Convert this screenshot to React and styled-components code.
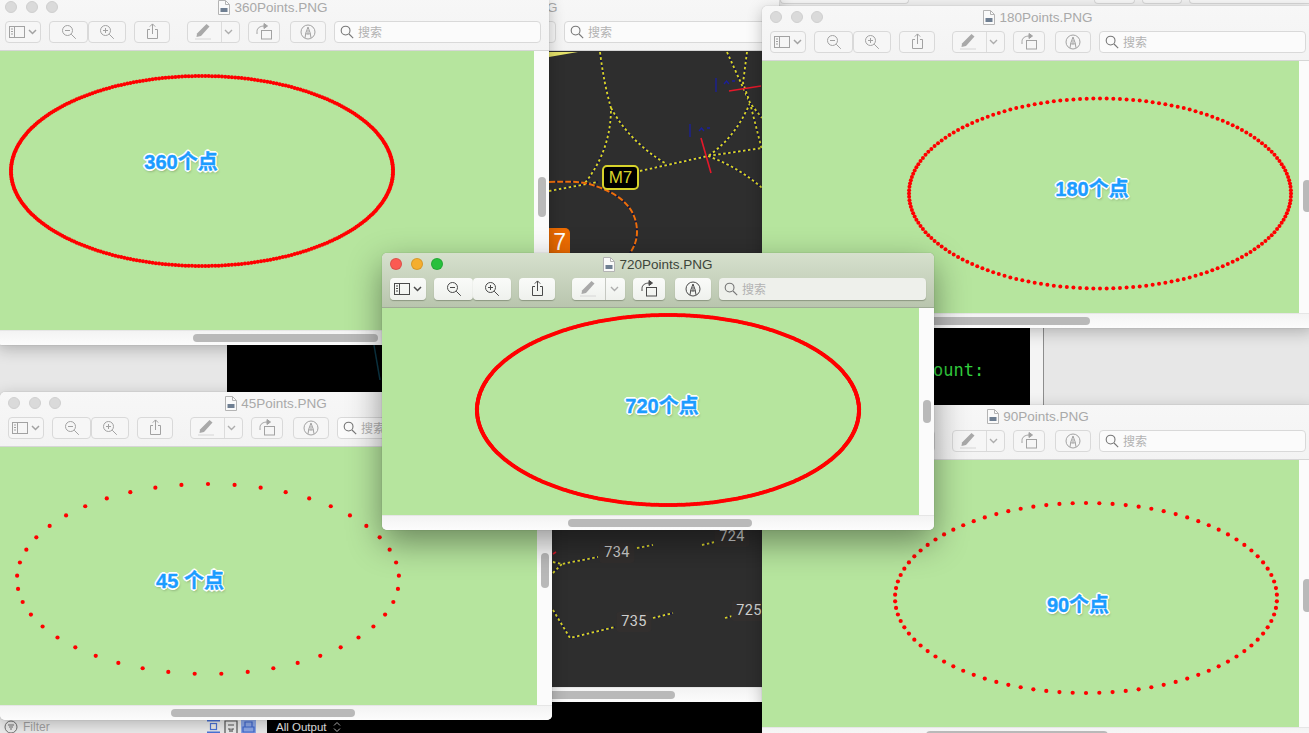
import React from 'react';
import styled, { createGlobalStyle } from 'styled-components';

const GlobalStyle = createGlobalStyle`
  html, body {
    margin: 0;
    padding: 0;
    width: 100%;
    height: 100%;
    overflow: hidden;
    background: #000;
    font-family: "Liberation Sans", "Noto Sans CJK SC", sans-serif;
  }
`;

const Desktop = styled.div`
  position: relative;
  width: 1309px;
  height: 733px;
  overflow: hidden;
  background: #000;
`;

/* the Xcode window that shows through the gaps between the previews */
const Backdrop = styled.div`
  height: 100%;
  display: flex;
  flex-direction: column;
`;

const BackdropTop = styled.div`
  flex: none;
  height: 20px;
  display: flex;
  gap: 7px;
  padding-left: 780px;
  background: #f1f1f1;
`;

const GhostButton = styled.div`
  flex: none;
  width: ${({ $w }) => $w}px;
  margin-left: ${({ $ml }) => $ml || 0}px;
  height: 3px;
  border: 1px solid #d8d8d8;
  border-top: 0;
  border-radius: 0 0 4px 4px;
  background: #f7f7f7;
`;

const BackdropMiddle = styled.div`
  flex: 1;
  display: grid;
  grid-template-columns: 227px 803px 14px 1fr;
`;

const GreyPane = styled.div`
  background: #e7e7e7;
`;

const LightPane = styled.div`
  background: #f4f4f4;
  border-right: 1px solid #8d8d8d;
`;

const ConsolePane = styled.div`
  position: relative;
  background: #000;
  padding: 339px 0 0 706px;
  font: 17px/22px "DejaVu Sans Mono", monospace;
  color: #33d03f;
`;

const ConsoleStroke = styled.svg`
  position: absolute;
  left: 145px;
  top: 325px;
  width: 10px;
  height: 35px;
`;

const BackdropBottom = styled.div`
  flex: none;
  height: 13px;
  display: flex;
  align-items: center;
`;

const DebugBar = styled.div`
  flex: none;
  width: 267px;
  height: 100%;
  display: flex;
  align-items: center;
  background: #ececec;
  color: #a3a3a3;
  font-size: 12px;
`;

const FilterIcon = styled.svg`
  flex: none;
  margin-left: 4px;
`;

const FilterLabel = styled.span`
  margin-left: 5px;
  width: 184px;
`;

const OutputBar = styled.div`
  display: flex;
  align-items: center;
  gap: 6px;
  padding-left: 9px;
  color: #e8e8e8;
  font-size: 11.5px;
`;

const Window = styled.section`
  position: absolute;
  left: ${({ $x }) => $x}px;
  top: ${({ $y }) => $y}px;
  width: 552px;
  height: ${({ $h }) => $h}px;
  display: flex;
  flex-direction: column;
  border-radius: 5px;
  overflow: hidden;
  background: #f6f6f6;
  box-shadow: ${({ $active }) => ($active
    ? '0 12px 34px rgba(0,0,0,.42), 0 0 1px rgba(0,0,0,.4)'
    : '0 4px 16px rgba(0,0,0,.24), 0 0 1px rgba(0,0,0,.35)')};
  ${({ $clipLeft }) => ($clipLeft ? `clip-path: inset(0 -40px -40px ${$clipLeft}px);` : '')}
`;

const Chrome = styled.header`
  position: relative;
  flex: none;
  height: 55px;
  box-sizing: border-box;
  padding-top: 25px;
  border-bottom: 1px solid ${({ $active }) => ($active ? '#9fab96' : '#d6d6d6')};
  background: ${({ $active }) => ($active
    ? 'linear-gradient(#d6e0cd, #b9c5ae)'
    : 'linear-gradient(#f7f7f7, #f3f3f3)')};
`;

const Lights = styled.div`
  position: absolute;
  left: 8px;
  top: 5px;
  display: flex;
  gap: 8.500px;
`;

const Light = styled.span`
  width: 12px;
  height: 12px;
  border-radius: 50%;
  box-sizing: border-box;
  background: ${({ $color }) => $color || '#dadada'};
  border: 1px solid ${({ $color }) => ($color ? 'rgba(0,0,0,.12)' : '#cfcfcf')};
`;

const Title = styled.div`
  position: absolute;
  left: 0;
  right: 0;
  top: 3px;
  display: flex;
  justify-content: center;
  align-items: center;
  gap: 4px;
  height: 16px;
  font-size: 13.5px;
  color: ${({ $active }) => ($active ? '#3d453a' : '#a9a9a9')};
`;

const Toolbar = styled.div`
  display: flex;
  gap: 8px;
  height: 22px;
  padding: 0 8px;
`;

const Button = styled.div`
  flex: none;
  width: ${({ $w }) => $w}px;
  margin-left: ${({ $ml }) => $ml || 0}px;
  box-sizing: border-box;
  padding-bottom: 1px;
  display: flex;
  align-items: center;
  justify-content: center;
  border-radius: 4px;
  color: ${({ $active }) => ($active ? '#4a4a4a' : '#a2a2a2')};
  background: ${({ $active }) => ($active ? 'linear-gradient(#fafbf9, #eff1ed)' : '#f6f6f6')};
  border: ${({ $active }) => ($active ? '0' : '1px solid #d9d9d9')};
  box-shadow: ${({ $active }) => ($active ? '0 1px 1px rgba(60,70,50,.38)' : 'none')};
`;

const ButtonPair = styled.div`
  flex: none;
  display: flex;
`;

const Split = styled(Button)`
  justify-content: space-around;
  position: relative;
`;

const SplitLine = styled.span`
  position: absolute;
  top: 0;
  bottom: 0;
  left: ${({ $at }) => $at}px;
  width: 1px;
  background: ${({ $active }) => ($active ? '#c5c8c1' : '#dcdcdc')};
`;

const SearchField = styled(Button)`
  flex: 1;
  justify-content: flex-start;
  gap: 4px;
  padding-left: 5px;
  font-size: 12px;
  color: #b2b2b2;
  background: ${({ $active }) => ($active ? '#eef0eb' : '#fbfbfb')};
`;

const SearchHint = styled.span`
  font-family: "Noto Sans CJK SC", sans-serif;
`;

const Body = styled.div`
  flex: 1;
  min-height: 0;
  display: grid;
  grid-template-columns: 537px 15px;
  grid-template-rows: 1fr 15px;
`;

const Canvas = styled.div`
  position: relative;
  overflow: hidden;
  background: ${({ $dark }) => ($dark ? '#2e2e2e' : '#b6e59e')};
`;

const Figure = styled.svg`
  position: absolute;
  left: 0;
  top: 0;
  width: 100%;
  height: 100%;
`;

const Caption = styled.div`
  position: absolute;
  left: ${({ $x }) => $x}px;
  top: ${({ $y }) => $y}px;
  transform: translate(-50%, -50%);
  white-space: pre;
  font: bold 20px/24px "Liberation Sans", "Noto Sans CJK SC", sans-serif;
  color: #1c9cff;
  -webkit-text-stroke: .4px #1c9cff;
  text-shadow:
    1.7px 0 0 #fff, -1.7px 0 0 #fff, 0 1.7px 0 #fff, 0 -1.7px 0 #fff,
    1.3px 1.3px 0 #fff, -1.3px 1.3px 0 #fff, 1.3px -1.3px 0 #fff, -1.3px -1.3px 0 #fff,
    1px 2px 3px rgba(0,0,0,.4);
`;

const VTrack = styled.div`
  position: relative;
  background: #fbfbfb;
`;

const VThumb = styled.div`
  position: absolute;
  left: 4px;
  top: ${({ $top }) => $top}px;
  width: 8px;
  height: ${({ $h }) => $h}px;
  border-radius: 4px;
  background: #b9b9b9;
`;

const HTrack = styled.div`
  position: relative;
  grid-column: 1 / 3;
  background: linear-gradient(#f3f3f3, #fcfcfc);
  border-top: 1px solid #e6e6e6;
`;

const HThumb = styled.div`
  position: absolute;
  left: ${({ $left }) => $left}px;
  top: 3px;
  width: ${({ $w }) => $w}px;
  height: 8px;
  border-radius: 4px;
  background: #b9b9b9;
`;

const MapLabel = styled.div`
  position: absolute;
  left: ${({ $x }) => $x}px;
  top: ${({ $y }) => $y}px;
  transform: translate(-50%, -50%);
  padding: 2px 5px;
  border-radius: 3px;
  background: #322f2e;
  color: #cfcfcf;
  font: 400 14.5px/16px Roboto, "Liberation Sans", sans-serif;
  letter-spacing: .3px;
`;

const StopBadge = styled.div`
  position: absolute;
  left: ${({ $x }) => $x}px;
  top: ${({ $y }) => $y}px;
  width: 37px;
  height: 25px;
  box-sizing: border-box;
  display: flex;
  align-items: center;
  justify-content: center;
  border: 2px solid #d7d32b;
  border-radius: 5px;
  background: #000;
  color: #d7d32b;
  font: 17px/20px "Liberation Sans", sans-serif;
`;

const LineBadge = styled.div`
  position: absolute;
  left: ${({ $x }) => $x}px;
  top: ${({ $y }) => $y}px;
  width: 21px;
  height: 26px;
  border-radius: 0 5px 0 0;
  background: #ed6c02;
  color: #fff;
  font: 23px/28px "Liberation Sans", sans-serif;
  text-align: right;
  padding-right: 4px;
  box-sizing: border-box;
`;

const Sidebar = () => (
  <svg width="30" height="14" viewBox="0 0 30 14" fill="none" stroke="currentColor" strokeWidth="1">
    <rect x="1.5" y="1.5" width="15" height="11" />
    <path d="M6.5 1.5v11M3 4h2M3 6.5h2M3 9h2" />
    <path d="M21 5l3.5 3.5L28 5" strokeWidth="1.5" />
  </svg>
);

const Zoom = ({ plus }) => (
  <svg width="16" height="16" viewBox="0 0 16 16" fill="none" stroke="currentColor" strokeWidth="1">
    <circle cx="6.5" cy="6.5" r="5" />
    <path d="M10.2 10.2l4.6 4.6M4 6.5h5" />
    {plus && <path d="M6.5 4v5" />}
  </svg>
);

const Share = () => (
  <svg width="13" height="17" viewBox="0 0 13 17" fill="none" stroke="currentColor" strokeWidth="1">
    <path d="M4 6.5H1.5v9h10v-9H9M6.5 11V1M3.8 3.6l2.7-2.7 2.7 2.7" />
  </svg>
);

const Pen = () => (
  <svg width="18" height="17" viewBox="0 0 18 17">
    <path d="M3 10.5L12.5 1l3 2.5L7 13l-4.500 1z" fill="#a9a9a9" />
    <path d="M1 16h16" stroke="#d6d6d6" strokeWidth="1" />
  </svg>
);

const Caret = () => (
  <svg width="9" height="6" viewBox="0 0 9 6" fill="none" stroke="#adadad" strokeWidth="1.4">
    <path d="M1 1l3.5 3.5L8 1" />
  </svg>
);

const Rotate = () => (
  <svg width="19" height="17" viewBox="0 0 19 17" fill="none" stroke="currentColor" strokeWidth="1">
    <rect x="6.5" y="7.5" width="10" height="8.5" />
    <path d="M2 11V8.5C2 5 5 3 9.5 3" />
    <path d="M9 .5L12.5 3 9 5.5z" fill="currentColor" />
  </svg>
);

const Annotate = () => (
  <svg width="16" height="16" viewBox="0 0 16 16" fill="none" stroke="currentColor" strokeWidth="1">
    <circle cx="8" cy="8" r="7" />
    <path d="M5 14l.8-5L8 3l2.200 6 .8 5M5.800 9.500c1 .8 3.400 .8 4.400 0M8 6v4" />
  </svg>
);

const Lens = () => (
  <svg width="14" height="14" viewBox="0 0 14 14" fill="none" stroke="#777" strokeWidth="1.1">
    <circle cx="5.6" cy="5.6" r="4.4" />
    <path d="M9 9l4.2 4.2" />
  </svg>
);

const FileGlyph = () => (
  <svg width="12" height="15" viewBox="0 0 12 15">
    <path d="M.5.5h7l4 4v10H.5z" fill="#fafafa" stroke="#b4b4b4" />
    <path d="M7.5.5v4h4" fill="none" stroke="#b4b4b4" />
    <rect x="2.5" y="8" width="7" height="4" fill="#6f7f92" />
  </svg>
);

const PointRing = ({ cx, cy, count, r }) => (
  <Figure aria-hidden="true">
    {Array.from({ length: count }, (_, i) => {
      const a = (i / count) * Math.PI * 2 - Math.PI / 2;
      return (
        <circle
          key={i}
          cx={cx + 191 * Math.cos(a)}
          cy={cy + 95 * Math.sin(a)}
          r={r}
          fill="#ff0000"
        />
      );
    })}
  </Figure>
);

const Trail = ({ d }) => (
  <>
    <path d={d} fill="none" stroke="#13133f" strokeWidth="1.8" strokeDasharray="2.500 2.500" strokeDashoffset="2.500" />
    <path d={d} fill="none" stroke="#d9d42a" strokeWidth="1.8" strokeDasharray="2.500 2.500" />
  </>
);

/* coordinates here are taken from the page, the group moves them into the window body */
const trails = [
  'M600 52Q604 84 611 108Q611 150 585 183',
  'M611 108Q630 142 665 163',
  'M549 191L598 182',
  'M640 171L708 156L762 148',
  'M750 103Q735 138 708 156',
  'M708 156Q740 168 762 188',
  'M727 52L750 103L762 150',
  'M747 52L743 83L750 103L762 118',
  'M553 562L562 564L598 557',
  'M637 548L653 545',
  'M702 545L715 542',
  'M553 573L562 564',
  'M553 610L570 638L615 627',
  'M653 618L673 613',
  'M725 618L732 616',
];

const MapDrawing = () => (
  <Figure aria-hidden="true">
    <g transform="translate(-227 -51)">
      <path d="M549 57L578 52H549z" fill="#e6e36a" />
      {trails.map((d) => <Trail key={d} d={d} />)}
      <path d="M549 182Q575 181 585 183Q637 196 637 232Q637 243 630 253" fill="none" stroke="#16163a" strokeWidth="2" />
      <path d="M549 182Q575 181 585 183Q637 196 637 232Q637 243 630 253" fill="none" stroke="#ee6f0a" strokeWidth="2" strokeDasharray="6 2" />
      <path d="M729 91L761 86M701 138L711 173M553 554L556 552" stroke="#e5182a" strokeWidth="1.6" fill="none" />
      <path d="M716 78v14M690 124v13M724 84l2.500-3 2.500 3M732 81h3M699 131l2.500-3 2.500 3M707 128h3" stroke="#1a1f9c" strokeWidth="1.3" fill="none" />
    </g>
  </Figure>
);

const Preview = ({ x, y, h, title, active, hThumb, vThumb, dark, clipLeft, children }) => (
  <Window $x={x} $y={y} $h={h} $active={active} $clipLeft={clipLeft}>
    <Chrome $active={active}>
      <Lights>
        <Light $color={active ? '#fb5a52' : undefined} />
        <Light $color={active ? '#f5ae2e' : undefined} />
        <Light $color={active ? '#27c03c' : undefined} />
      </Lights>
      <Title $active={active}>
        <FileGlyph />
        {title}
      </Title>
      <Toolbar>
        <Button $w={36} $active={active}><Sidebar /></Button>
        <ButtonPair>
          <Button $w={39} $active={active}><Zoom /></Button>
          <Button $w={38} $active={active}><Zoom plus /></Button>
        </ButtonPair>
        <Button $w={36} $active={active}><Share /></Button>
        <Split $w={53} $ml={9} $active={active}>
          <Pen />
          <SplitLine $at={33} $active={active} />
          <Caret />
        </Split>
        <Button $w={32} $active={active}><Rotate /></Button>
        <Button $w={36} $ml={2} $active={active}><Annotate /></Button>
        <SearchField $active={active}>
          <Lens />
          <SearchHint>搜索</SearchHint>
        </SearchField>
      </Toolbar>
    </Chrome>
    <Body>
      <Canvas $dark={dark}>{children}</Canvas>
      <VTrack>
        {vThumb && <VThumb $top={vThumb[0]} $h={vThumb[1]} />}
      </VTrack>
      <HTrack>
        <HThumb $left={hThumb[0]} $w={hThumb[1]} />
      </HTrack>
    </Body>
  </Window>
);

export default function App() {
  return (
    <Desktop>
      <GlobalStyle />

      <Backdrop>
        <BackdropTop>
          <GhostButton $w={127} />
          <GhostButton $w={39} $ml={178} />
          <GhostButton $w={38} />
          <GhostButton $w={122} />
        </BackdropTop>
        <BackdropMiddle>
          <GreyPane />
          <ConsolePane>
            ount:
            <ConsoleStroke viewBox="0 0 10 35" aria-hidden="true">
              <path d="M2 0L8 35" stroke="#0d3a4a" strokeWidth="1.5" />
            </ConsoleStroke>
          </ConsolePane>
          <LightPane />
          <GreyPane />
        </BackdropMiddle>
        <BackdropBottom>
          <DebugBar>
            <FilterIcon width="14" height="14" viewBox="0 0 14 14" fill="none" stroke="#707070" strokeWidth="1">
              <circle cx="7" cy="7" r="6" />
              <path d="M4 5h6M5 7h4M6 9h2" />
            </FilterIcon>
            <FilterLabel>Filter</FilterLabel>
            <svg width="50" height="13" viewBox="0 0 50 13" fill="none" strokeWidth="1.2">
              <path d="M0 .5h13M0 12.500h13" stroke="#4a73d8" strokeWidth="2" />
              <rect x="3.500" y="3.500" width="6" height="6" stroke="#4a73d8" />
              <path d="M18 13V1h12v12M21 5h6M21 9h2v3M27 9h-2v3" stroke="#555" />
              <rect x="34" y="0" width="15" height="13" fill="#8da8e8" />
              <path d="M36 12V7h11v5zM38 7V2h7v5" stroke="#3f66cc" />
            </svg>
          </DebugBar>
          <OutputBar>
            All Output
            <svg width="8" height="12" viewBox="0 0 8 12" fill="none" stroke="#bdbdbd" strokeWidth="1">
              <path d="M1 4.500L4 1.500l3 3M1 7.500l3 3 3-3" />
            </svg>
          </OutputBar>
        </BackdropBottom>
      </Backdrop>

      <Preview x={227} y={-4} h={706} title="500Points.PNG" hThumb={[263, 185]} dark clipLeft={155}>
        <MapDrawing />
        <StopBadge $x={375} $y={114}>M7</StopBadge>
        <LineBadge $x={322} $y={177}>7</LineBadge>
        <MapLabel $x={390} $y={502}>734</MapLabel>
        <MapLabel $x={505} $y={486}>724</MapLabel>
        <MapLabel $x={407} $y={571}>735</MapLabel>
        <MapLabel $x={522} $y={560}>725</MapLabel>
      </Preview>

      <Preview x={-3} y={-4} h={349} title="360Points.PNG" hThumb={[196, 185]} vThumb={[126, 40]}>
        <PointRing cx={205} cy={120} count={360} r={2} />
        <Caption $x={184} $y={111}>360个点</Caption>
      </Preview>

      <Preview x={762} y={6} h={322} title="180Points.PNG" hThumb={[144, 184]} vThumb={[119, 32]}>
        <PointRing cx={338} cy={132.500} count={180} r={2} />
        <Caption $x={330} $y={128}>180个点</Caption>
      </Preview>

      <Preview x={762} y={405} h={337} title="90Points.PNG" hThumb={[164, 182]} vThumb={[119, 33]}>
        <PointRing cx={324} cy={138} count={90} r={2.100} />
        <Caption $x={316} $y={145}>90个点</Caption>
      </Preview>

      <Preview x={0} y={392} h={328} title="45Points.PNG" hThumb={[171, 184]} vThumb={[106, 35]}>
        <PointRing cx={208} cy={132} count={45} r={2.100} />
        <Caption $x={190} $y={134}>45 个点</Caption>
      </Preview>

      <Preview x={382} y={253} h={277} title="720Points.PNG" active hThumb={[186, 184]} vThumb={[92, 23]}>
        <PointRing cx={286} cy={102} count={720} r={2} />
        <Caption $x={280} $y={98}>720个点</Caption>
      </Preview>
    </Desktop>
  );
}
